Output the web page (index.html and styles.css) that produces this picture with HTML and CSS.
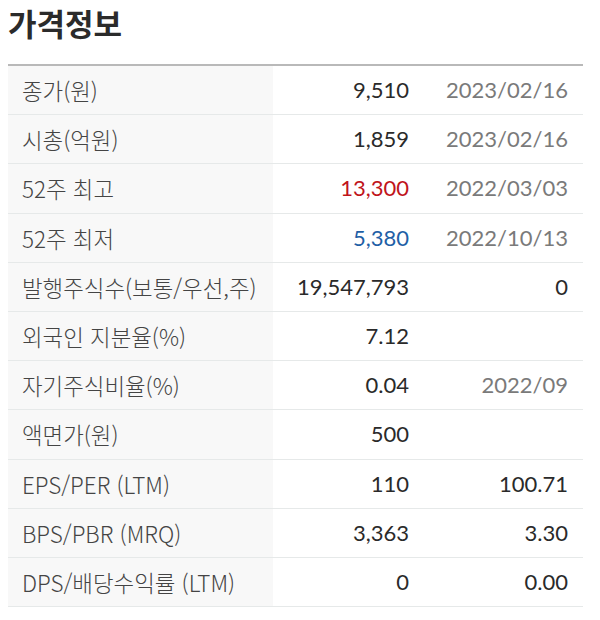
FILE: index.html
```html
<!DOCTYPE html>
<html lang="ko">
<head>
<meta charset="utf-8">
<title>가격정보</title>
<link rel="stylesheet" href="styles.css">
</head>
<body>
<h2 class="title">가격정보</h2>
<table class="price">
  <tbody>
    <tr><th>종가(원)</th><td class="val">9,510</td><td class="date">2023/02/16</td></tr>
    <tr><th>시총(억원)</th><td class="val">1,859</td><td class="date">2023/02/16</td></tr>
    <tr><th>52주 최고</th><td class="val up">13,300</td><td class="date">2022/03/03</td></tr>
    <tr><th>52주 최저</th><td class="val down">5,380</td><td class="date">2022/10/13</td></tr>
    <tr><th>발행주식수(보통/우선,주)</th><td class="val">19,547,793</td><td class="val">0</td></tr>
    <tr><th>외국인 지분율(%)</th><td class="val">7.12</td><td class="date"></td></tr>
    <tr><th>자기주식비율(%)</th><td class="val">0.04</td><td class="date">2022/09</td></tr>
    <tr><th>액면가(원)</th><td class="val">500</td><td class="date"></td></tr>
    <tr><th>EPS/PER (LTM)</th><td class="val">110</td><td class="val">100.71</td></tr>
    <tr><th>BPS/PBR (MRQ)</th><td class="val">3,363</td><td class="val">3.30</td></tr>
    <tr><th>DPS/배당수익률 (LTM)</th><td class="val">0</td><td class="val">0.00</td></tr>
  </tbody>
</table>
</body>
</html>
```
FILE: styles.css
```css
html, body {
  margin: 0;
  padding: 0;
  background: #ffffff;
}
body {
  padding: 8px;
  font-family: "Noto Sans CJK KR", "Noto Sans", sans-serif;
}
.title {
  margin: 0;
  font-size: 31px;
  font-weight: 700;
  color: #2b2b2b;
  line-height: 30px;
  height: 56px;
}
.price {
  width: 575px;
  border-collapse: collapse;
  border-top: 2px solid #b9b9b9;
  table-layout: fixed;
}
.price tr {
  border-bottom: 1px solid #e6e9e9;
}
.price th,
.price td {
  height: 48.2px;
  padding: 0 15px 0 14px;
  font-size: 22px;
  line-height: 24px;
}
.price th {
  width: 236px;
  background: #f8f8f8;
  text-align: left;
  font-weight: 300;
  font-size: 22.4px;
  color: #444444;
  white-space: nowrap;
}
.price td {
  font-family: "Lato", "Noto Sans CJK KR", sans-serif;
  text-align: right;
  font-size: 22px;
  font-weight: 400;
}
.price td.val {
  width: 122px;
  color: #2a2a2a;
}
.price td.date {
  color: #7a7a7a;
}
.price td.up {
  color: #c0141b;
}
.price td.down {
  color: #1f5fa6;
}
```
